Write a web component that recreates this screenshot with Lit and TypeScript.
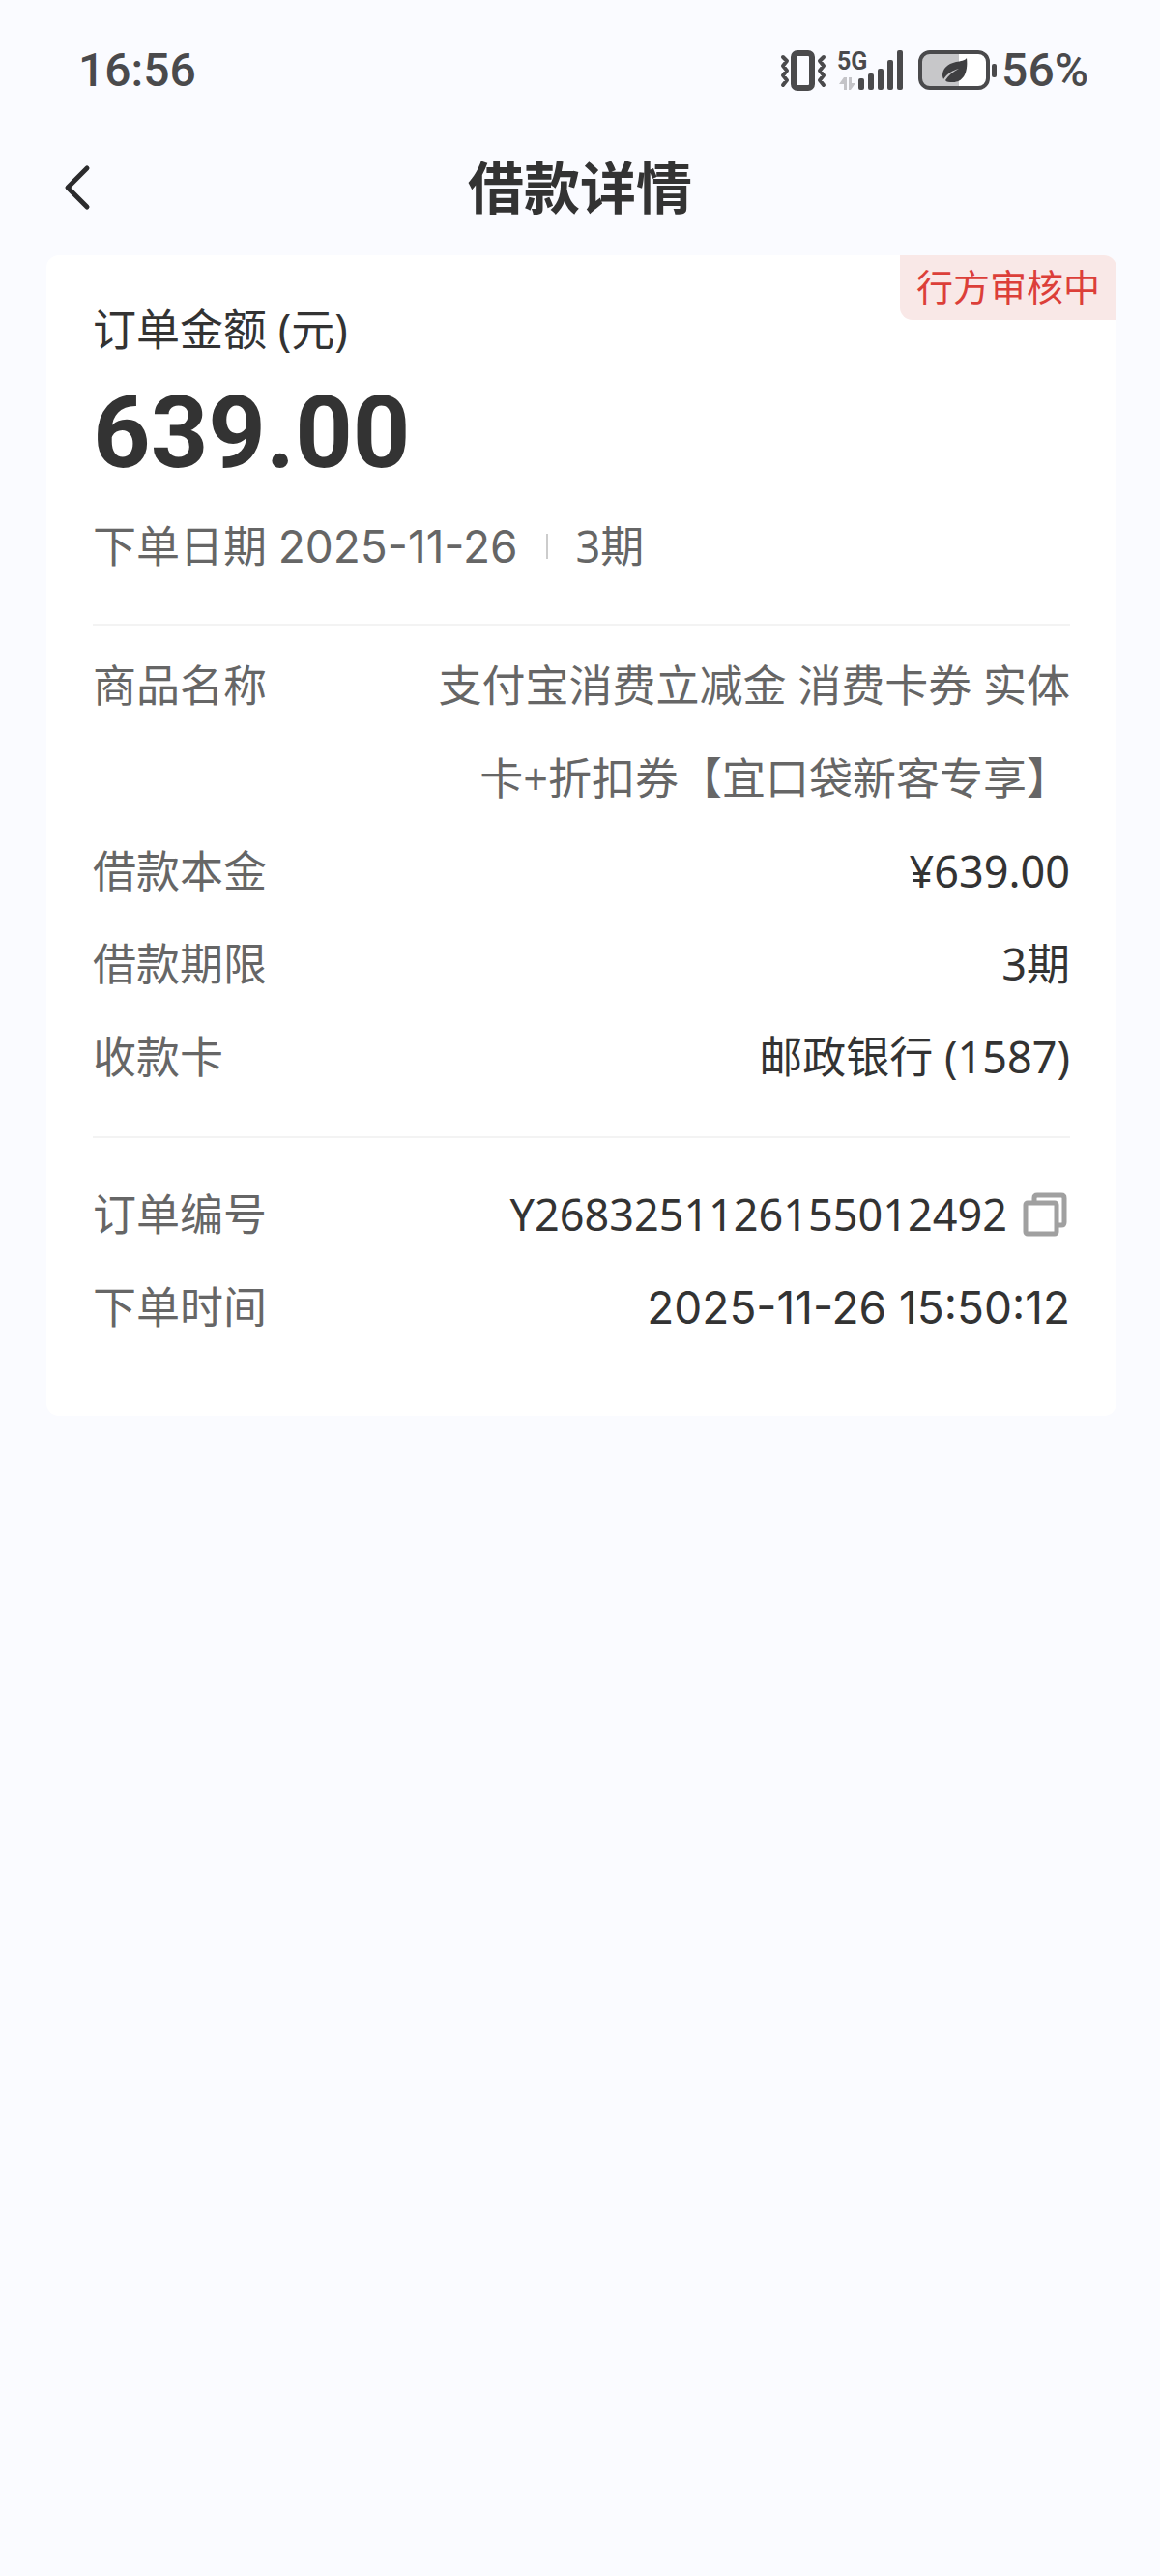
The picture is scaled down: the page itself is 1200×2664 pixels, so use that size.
import { LitElement, html, css, nothing } from "lit";
import { customElement, property } from "lit/decorators.js";

interface Field {
  label: string;
  value: string;
  muted?: boolean;
  date?: boolean;
  copyable?: boolean;
}

const LOAN_FIELDS: Field[] = [
  { label: "商品名称", value: "支付宝消费立减金 消费卡券 实体卡+折扣券【宜口袋新客专享】", muted: true },
  { label: "借款本金", value: "¥639.00" },
  { label: "借款期限", value: "3期" },
  { label: "收款卡", value: "邮政银行 (1587)" },
];

const ORDER_FIELDS: Field[] = [
  { label: "订单编号", value: "Y2683251126155012492", copyable: true },
  { label: "下单时间", value: "2025-11-26 15:50:12", date: true },
];

@customElement("status-bar")
export class StatusBar extends LitElement {
  static styles = css`
    :host {
      display: block;
    }
    .bar {
      display: flex;
      align-items: center;
      justify-content: space-between;
      height: 146px;
      padding: 0 74px 0 81px;
      box-sizing: border-box;
      color: #4a4a4c;
      font-family: Roboto, sans-serif;
      font-size: 48px;
      font-weight: 500;
      line-height: 64px;
    }
    .icons {
      display: flex;
      align-items: center;
    }
    svg {
      display: block;
      overflow: visible;
    }
    .vibrate {
      margin-right: 10px;
    }
    .signal {
      margin-right: 14px;
    }
    .battery {
      margin-right: 3px;
    }
    .net {
      font-size: 25px;
      font-weight: 700;
    }
  `;

  render() {
    return html`
      <div class="bar">
        <span>16:56</span>
        <div class="icons">
          <svg class="vibrate" width="50" height="44" viewBox="0 0 50 44" fill="none" stroke="#4a4a4c" aria-hidden="true">
            <rect x="15" y="4" width="19" height="36" rx="4" stroke-width="6" />
            <path d="M4 8l4 4-4 5 4 5-4 5 4 5-4 5M46 8l-4 4 4 5-4 5 4 5-4 5 4 5" stroke-width="4" stroke-linejoin="round" stroke-linecap="round" />
          </svg>
          <svg class="signal" width="70" height="44" viewBox="0 0 70 44" fill="#4a4a4c" aria-hidden="true">
            <text class="net" x="0" y="21">5G</text>
            <rect x="22" y="30" width="6" height="12" rx="2" />
            <rect x="32" y="25" width="6" height="17" rx="2" />
            <rect x="42" y="20" width="6" height="22" rx="2" />
            <rect x="52" y="11" width="6" height="31" rx="2" />
            <rect x="62" y="1" width="6" height="41" rx="2" />
            <path d="M7 29h3v13H7v-6H2zM12 29h3v6h4l-5 7h-2z" fill="#c4c4c8" />
          </svg>
          <svg class="battery" width="83" height="44" viewBox="0 0 83 44" aria-hidden="true">
            <rect x="2" y="3" width="70" height="37" rx="10" fill="#fff" />
            <path d="M12 3h30v37H12a10 10 0 0 1-10-10V13A10 10 0 0 1 12 3z" fill="#c7c7c9" />
            <rect x="2" y="3" width="70" height="37" rx="10" fill="none" stroke="#4a4a4c" stroke-width="4" />
            <rect x="76" y="15" width="5" height="14" rx="2" fill="#4a4a4c" />
            <path d="M50 9c-2 3-6 3-11 4-9 2-14 7-14 14 0 2 1 3 1 4 4-6 9-9 16-11-6 3-11 7-14 12 1 2 4 2 8 2 9 0 16-8 14-25z" fill="#3f3f41" />
          </svg>
          <span>56%</span>
        </div>
      </div>
    `;
  }
}

@customElement("field-list")
export class FieldList extends LitElement {
  @property({ attribute: false }) fields: Field[] = [];

  static styles = css`
    :host {
      display: block;
    }
    .list {
      margin: 0;
    }
    .row {
      display: flex;
      justify-content: space-between;
      line-height: 96px;
    }
    .label {
      flex: none;
      color: #666;
    }
    .value {
      display: flex;
      align-items: center;
      max-width: 66%;
      margin: 0;
      color: #333;
      text-align: right;
    }
    .muted {
      color: #666;
    }
    .date {
      font-family: Inter, "Noto Sans", sans-serif;
      font-size: 46px;
    }
    .copy {
      margin: 0 3px 0 16px;
      padding: 0;
      border: 0;
      background: none;
      cursor: pointer;
    }
    svg {
      display: block;
    }
  `;

  private copy(value: string) {
    navigator.clipboard?.writeText(value);
  }

  render() {
    return html`
      <dl class="list">
        ${this.fields.map(
          (f) => html`
            <div class="row">
              <dt class="label">${f.label}</dt>
              <dd class="value ${f.muted ? "muted" : ""} ${f.date ? "date" : ""}">
                <span>${f.value}</span>
                ${f.copyable
                  ? html`<button class="copy" type="button" aria-label="复制" @click=${() => this.copy(f.value)}>
                      <svg width="46" height="46" viewBox="0 0 46 46" fill="none" stroke="#a0a0a0" stroke-width="5" stroke-linejoin="round">
                        <path d="M12 9V6q0-3 3-3h25q3 0 3 3v25q0 3-3 3h-3" />
                        <rect x="3" y="11" width="32" height="32" rx="2" />
                      </svg>
                    </button>`
                  : nothing}
              </dd>
            </div>
          `,
        )}
      </dl>
    `;
  }
}

@customElement("app-root")
export class AppRoot extends LitElement {
  static styles = css`
    :host {
      display: block;
      min-height: 100vh;
      background: #fafbff;
      color: #333;
      font-family: "Noto Sans", "Noto Sans CJK SC", sans-serif;
      font-size: 45px;
      line-height: 64px;
    }
    .header {
      display: grid;
      grid-template-columns: 1fr auto 1fr;
      align-items: center;
      height: 96px;
      padding: 0 48px;
      margin-bottom: 22px;
    }
    .back {
      justify-self: start;
      padding: 0 16px;
      border: 0;
      background: none;
      cursor: pointer;
    }
    .back svg {
      display: block;
    }
    .title {
      margin: 0;
      font-size: 58px;
      font-weight: 700;
      line-height: 96px;
    }
    .card {
      position: relative;
      margin: 0 45px 0 48px;
      padding: 45px 48px 64px;
      border-radius: 13px;
      background: #fff;
    }
    .tag {
      position: absolute;
      top: 0;
      right: 0;
      padding: 0 17px 3px;
      border-radius: 0 13px 0 13px;
      background: #f9e8e7;
      color: #dc3f39;
      font-size: 38px;
      line-height: 64px;
    }
    .caption,
    .amount,
    .meta {
      margin: 0;
    }
    .amount {
      font-family: Roboto, sans-serif;
      font-size: 104px;
      font-weight: 700;
      line-height: 150px;
    }
    .meta {
      display: flex;
      align-items: center;
      margin-top: 10px;
      color: #666;
    }
    .date {
      font-family: Inter, "Noto Sans", sans-serif;
      font-size: 46px;
    }
    .bar {
      width: 2px;
      height: 26px;
      margin: 0 29px;
      background: #ccc;
    }
    .group {
      padding-top: 14px;
      margin-top: 48px;
      border-top: 2px solid #f3f3f3;
    }
    .order {
      padding-top: 31px;
      margin-top: 34px;
    }
  `;

  render() {
    return html`
      <status-bar></status-bar>
      <header class="header">
        <button class="back" type="button" aria-label="返回">
          <svg width="30" height="48" viewBox="0 0 30 48" fill="none" stroke="#2b2b2d" stroke-width="5" stroke-linecap="round" stroke-linejoin="round">
            <path d="M26 4L6 24l20 20" />
          </svg>
        </button>
        <h1 class="title">借款详情</h1>
      </header>
      <main class="card">
        <span class="tag">行方审核中</span>
        <p class="caption">订单金额 (元)</p>
        <p class="amount">639.00</p>
        <p class="meta">
          <span>下单日期 <time class="date">2025-11-26</time></span>
          <span class="bar"></span>
          <span>3期</span>
        </p>
        <section class="group">
          <field-list .fields=${LOAN_FIELDS}></field-list>
        </section>
        <section class="group order">
          <field-list .fields=${ORDER_FIELDS}></field-list>
        </section>
      </main>
    `;
  }
}
